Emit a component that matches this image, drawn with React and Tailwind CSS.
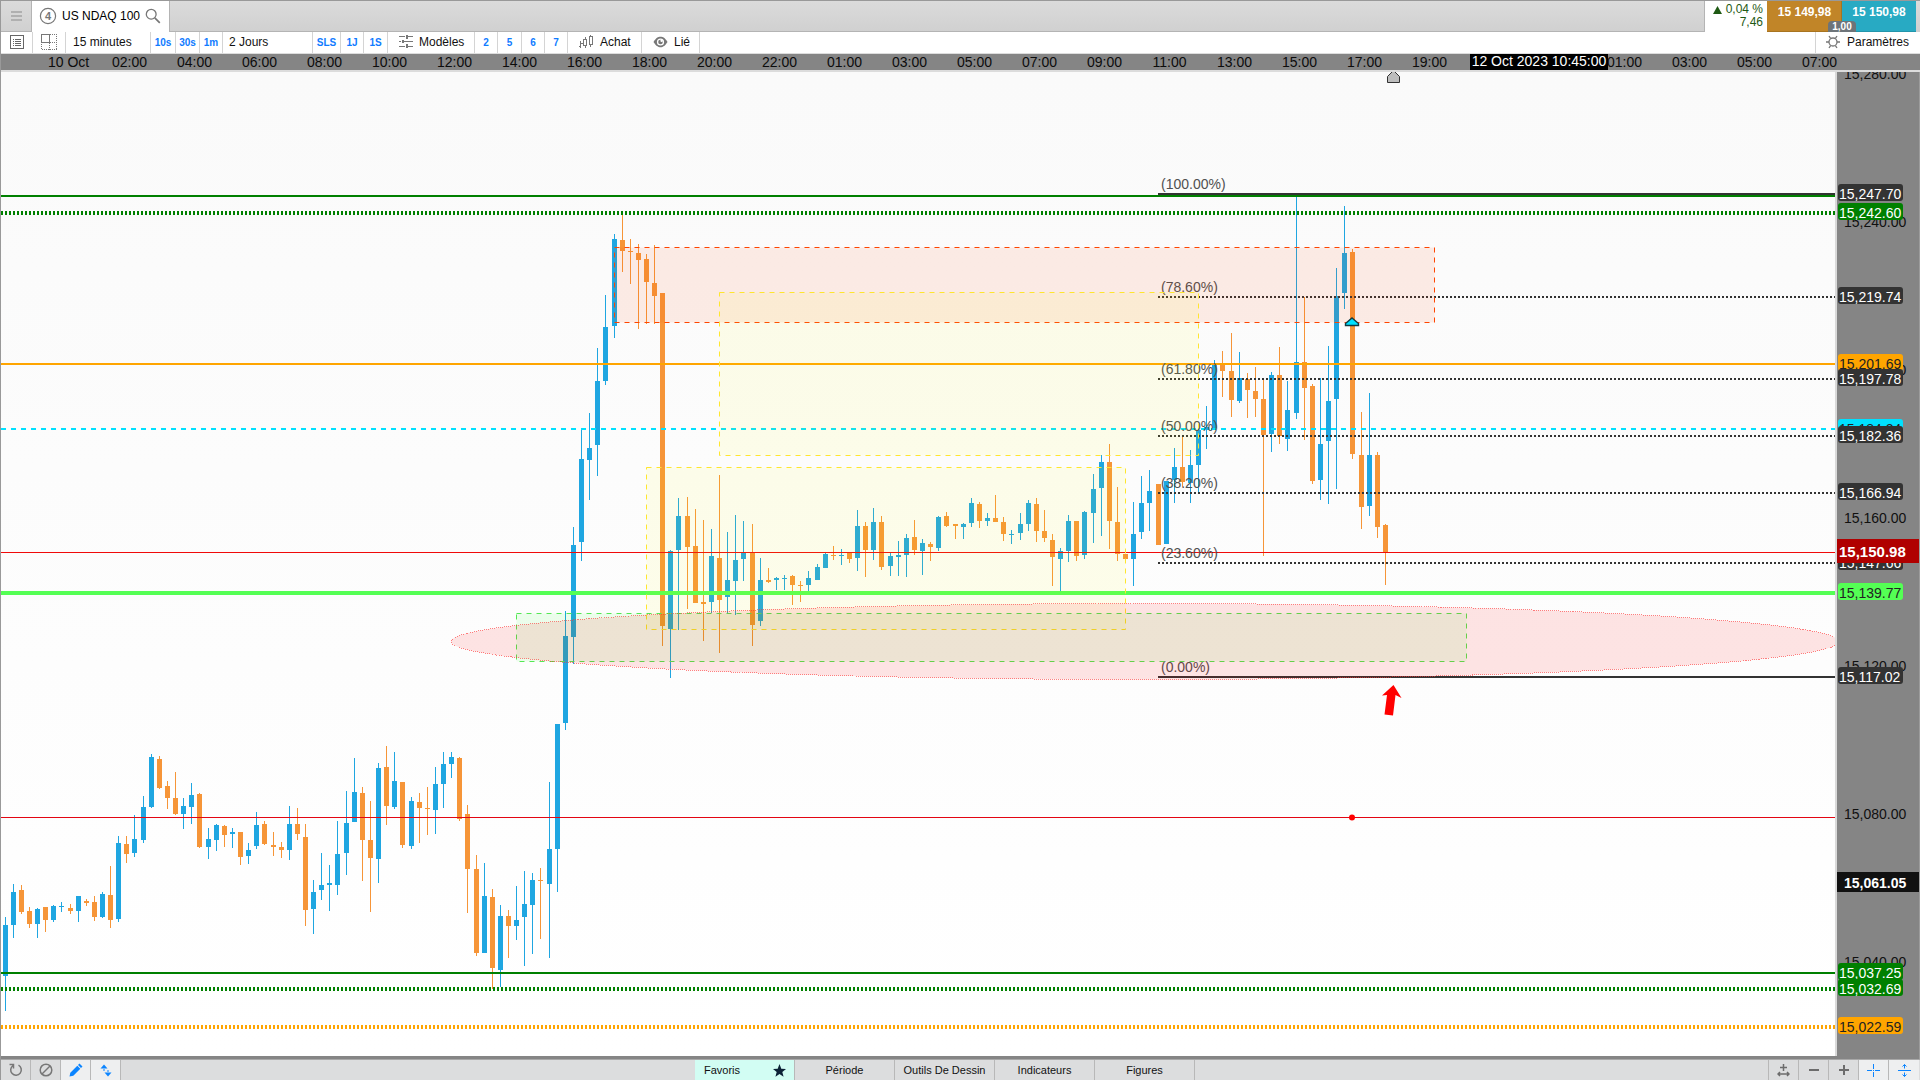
import React from "react";

/* [direction, x, high, bodyTop, bodyBottom, low] */
const CANDLES = [
  [1,5,917,925,976,1011],[1,13,884,892,925,938],[0,21,885,890,912,914],[0,29,907,911,924,928],
  [1,37,908,909,924,938],[0,45,907,907,920,932],[1,53,905,906,920,922],[1,61,902,906,907,912],
  [0,70,904,908,911,914],[1,78,896,896,911,922],[0,86,899,901,903,906],[0,94,896,902,917,921],
  [1,102,892,894,917,918],[0,110,866,895,920,928],[1,118,836,843,919,922],[0,126,836,844,854,863],
  [1,134,815,839,853,857],[1,143,796,807,840,843],[1,151,754,757,807,808],[0,159,756,759,788,789],
  [0,167,781,786,798,809],[0,175,772,798,814,815],[1,183,798,806,814,829],[1,191,783,795,807,824],
  [0,199,793,794,847,848],[1,208,828,839,847,859],[1,216,824,825,840,851],[0,224,825,826,835,847],
  [1,232,828,832,834,848],[0,240,832,832,857,865],[1,248,843,850,856,864],[1,256,812,825,846,849],
  [0,264,821,824,844,845],[0,273,832,845,847,856],[0,281,842,847,850,858],[1,289,806,824,850,860],
  [0,297,808,824,834,840],[0,305,824,837,910,926],[1,313,880,892,909,934],[1,321,853,885,890,900],
  [1,329,865,883,885,911],[1,337,821,854,885,895],[1,346,791,823,853,875],[1,354,758,792,822,822],
  [0,362,787,793,840,881],[0,370,801,840,858,912],[1,378,763,768,859,883],[0,386,746,767,806,825],
  [1,394,752,781,807,809],[0,402,782,782,845,848],[1,411,797,801,846,849],[0,419,793,802,808,843],
  [0,427,787,808,809,835],[1,435,767,784,810,834],[1,443,752,764,784,808],[1,451,752,757,764,778],
  [0,459,757,758,819,821],[0,467,805,814,869,913],[0,476,855,869,953,956],[1,484,863,896,953,953],
  [0,492,889,897,968,989],[1,500,905,916,970,987],[0,508,910,916,926,958],[1,516,886,920,926,940],
  [1,524,871,904,917,966],[1,532,873,880,905,954],[0,540,868,880,881,939],[1,549,782,849,884,958],
  [1,557,724,724,849,892],[1,565,611,636,723,730],[1,573,527,545,637,664],[1,581,430,459,542,561],
  [1,589,413,448,460,500],[1,597,348,381,445,476],[1,605,295,327,381,385],[1,614,234,239,326,338],
  [0,622,215,240,251,272],[0,630,239,251,252,284],[0,638,244,253,260,329],[0,646,254,259,282,324],
  [0,654,245,283,296,324],[0,662,293,293,626,646],[1,670,550,551,629,678],[1,678,498,516,550,630],
  [0,687,497,516,547,609],[0,695,509,546,603,603],[0,703,520,602,604,641],[1,711,529,556,602,613],
  [0,719,475,558,600,653],[1,727,532,580,597,613],[1,735,515,560,581,615],[1,743,521,552,559,581],
  [0,752,524,552,625,646],[1,760,558,580,621,626],[0,768,568,580,582,583],[1,776,577,578,580,590],
  [1,784,575,578,579,590],[0,792,575,576,585,605],[0,800,581,585,586,602],[1,808,571,578,585,591],
  [1,817,564,567,580,580],[1,825,552,554,568,568],[0,833,546,555,556,560],[1,841,549,555,556,565],
  [0,849,552,553,559,563],[1,857,510,526,558,571],[0,865,522,526,550,577],[1,873,508,522,550,560],
  [0,881,516,522,567,570],[1,890,552,556,566,576],[1,898,541,555,557,576],[1,906,534,538,555,577],
  [0,914,520,537,550,555],[1,922,539,543,551,575],[0,930,542,544,547,561],[1,938,516,517,548,551],
  [0,946,512,516,526,527],[0,955,524,524,526,539],[1,963,523,524,527,539],[1,971,498,503,523,527],
  [0,979,502,504,521,528],[1,987,513,518,521,526],[0,995,495,518,522,522],[0,1003,517,522,534,541],
  [1,1011,530,534,535,544],[1,1020,513,524,533,540],[1,1028,500,503,524,531],[0,1036,498,504,531,542],
  [0,1044,510,531,538,542],[0,1052,534,540,557,586],[1,1060,548,551,559,591],[1,1068,515,521,551,562],
  [0,1076,521,521,556,561],[1,1084,511,512,555,559],[1,1093,474,489,513,543],[1,1101,455,462,488,536],
  [0,1109,444,462,521,549],[0,1117,487,522,554,561],[0,1125,554,554,559,559],[1,1133,502,534,559,586],
  [1,1141,476,503,532,539],[1,1149,470,491,503,531],[0,1158,484,484,545,545],[1,1166,481,481,544,544],
  [1,1174,448,467,480,503],[0,1182,437,467,482,487],[1,1190,450,465,483,503],[1,1198,427,430,465,493],
  [1,1206,406,427,430,449],[1,1214,360,365,428,428],[0,1222,351,364,371,397],[0,1231,333,371,400,417],
  [1,1239,352,378,401,403],[0,1247,373,379,390,418],[0,1255,367,391,399,417],[0,1263,379,399,435,556],
  [1,1271,372,375,434,452],[0,1279,347,375,436,444],[1,1287,381,410,439,451],[1,1296,197,362,413,419],
  [0,1304,297,362,388,440],[0,1312,384,386,481,484],[1,1320,378,444,480,500],[1,1328,346,401,441,504],
  [1,1336,268,296,399,489],[1,1344,206,253,293,309],[0,1352,249,252,454,459],[0,1361,412,455,507,529],
  [1,1369,393,455,506,516],[0,1377,452,455,527,538],[0,1385,524,525,552,585],
];

/* [y, colour, thickness, dash] */
const LEVELS = [
  [196, "#008000", 2, ""],
  [213, "#008000", 4, "2 2"],
  [364, "#ffa500", 2, ""],
  [429, "#00e1ff", 2, "5 5"],
  [593, "#54ff54", 4, ""],
  [973, "#008000", 2, ""],
  [989, "#008000", 4, "2 2"],
  [1027, "#ffa500", 4, "2 2"],
];

const FIBS = [
  ["(100.00%)", 194, ""],
  ["(78.60%)", 297, "2 2"],
  ["(61.80%)", 379, "2 2"],
  ["(50.00%)", 436, "2 2"],
  ["(38.20%)", 493, "2 2"],
  ["(23.60%)", 563, "2 2"],
  ["(0.00%)", 677, ""],
];

const TICKS = [
  ["15,280.00", 74],
  ["15,240.00", 222],
  ["15,200.00", 370],
  ["15,160.00", 518],
  ["15,120.00", 666],
  ["15,080.00", 814],
  ["15,040.00", 962],
];

const TAGS = [
  ["15,247.70", 194, "bg-[#333333] text-white"],
  ["15,242.60", 213, "bg-[#008000] text-white"],
  ["15,219.74", 297, "bg-[#333333] text-white"],
  ["15,201.69", 364, "bg-[#ffa500] text-[#222222]"],
  ["15,197.78", 379, "bg-[#333333] text-white"],
  ["15,184.24", 429, "bg-[#00e1ff] text-[#222222]"],
  ["15,182.36", 436, "bg-[#333333] text-white"],
  ["15,166.94", 493, "bg-[#333333] text-white"],
  ["15,147.66", 563, "bg-[#333333] text-white"],
  ["15,139.77", 593, "bg-[#54ff54] text-[#222222]"],
  ["15,117.02", 677, "bg-[#333333] text-white"],
  ["15,037.25", 973, "bg-[#008000] text-white"],
  ["15,032.69", 989, "bg-[#008000] text-white"],
  ["15,022.59", 1027, "bg-[#ffa500] text-[#222222]"],
];

const TIMES = [
  "02:00","04:00","06:00","08:00","10:00","12:00","14:00","16:00","18:00","20:00","22:00",
  "01:00","03:00","05:00","07:00","09:00","11:00","13:00","15:00","17:00","19:00","21:00","23:00",
  "01:00","03:00","05:00","07:00",
];

/* y coordinate of the plot's first row */
const TOP = 72;

function Header() {
  return (
    <header className="flex h-8 shrink-0 border-t border-[#999999] bg-linear-to-b from-[#dbdbdb] to-[#d0d0d0]">
      <button aria-label="Menu" className="flex w-[31px] items-center justify-center border-r border-b border-[#b4b4b4]">
        <svg width="11" height="11" viewBox="0 0 11 11" fill="#b0b0b0" shapeRendering="crispEdges">
          <path d="M0 0h11v2H0zM0 4h11v2H0zM0 8h11v2H0z" />
        </svg>
      </button>
      <div className="flex w-[137px] items-center bg-white pb-[2px] pl-[7px]">
        <svg width="18" height="18" viewBox="0 0 18 18" fill="none" stroke="#777777">
          <circle cx="9" cy="9" r="7.6" strokeWidth="1.2" />
          <text x="9" y="13" textAnchor="middle" fontSize="11" fontWeight="700" fill="#777777" stroke="none">4</text>
        </svg>
        <h1 className="ml-[5px] whitespace-nowrap text-xs">US NDAQ 100</h1>
        <button aria-label="Rechercher" className="ml-[5px]">
          <svg width="16" height="16" viewBox="0 0 16 16" fill="none" stroke="#777777">
            <circle cx="6.2" cy="6.2" r="4.9" strokeWidth="1.3" />
            <path d="M9.8 9.8l5 5" strokeWidth="1.7" />
          </svg>
        </button>
      </div>
      <div className="flex-1 border-x border-b border-[#b4b4b4]" />
      <div className="flex w-[62px] flex-col items-end bg-white pt-[2px] pr-1 text-xs leading-[13px] text-[#1f5a14]">
        <span className="flex items-center gap-1 whitespace-nowrap">
          <svg width="9" height="8" viewBox="0 0 9 8" fill="#1f5a14"><path d="M4.5 0L9 8H0z" /></svg>
          0,04 %
        </span>
        <span>7,46</span>
      </div>
      <div className="relative mr-1 flex text-xs font-bold text-white">
        <button className="flex w-[75px] justify-center border-r border-b border-[#a87420] bg-[#c18528] pt-1 pl-px leading-[14px]">15 149,98</button>
        <button className="flex w-[74px] justify-center border-b border-[#2295ab] bg-[#28aac3] pt-1 leading-[14px]">15 150,98</button>
        <span className="absolute bottom-0 left-[61px] h-[11px] w-7 rounded-t-sm bg-[#6d7479] text-center text-[10px] leading-[11px]">1,00</span>
      </div>
    </header>
  );
}

const CELL = "flex items-center border-r border-[#d4d4d4] pb-[2px] ";
const QUICK = "flex items-center justify-center border-r border-[#d4d4d4] text-[10px] font-bold text-[#0f7bff] ";

function Toolbar() {
  return (
    <nav className="flex h-[22px] shrink-0 border-b border-[#dddddd] bg-white text-xs text-[#111111]">
      <button aria-label="Liste" className={CELL + "w-8 justify-center"}>
        <svg width="14" height="14" viewBox="0 0 14 14" fill="none" stroke="#666666" shapeRendering="crispEdges">
          <rect x="0.5" y="0.5" width="13" height="13" />
          <path d="M3 4h1M5 4h6M3 6h1M5 6h6M3 8h1M5 8h6M3 10h1M5 10h6" />
        </svg>
      </button>
      <button aria-label="Disposition" className={CELL + "w-[33px] justify-center"}>
        <svg width="16" height="16" viewBox="0 0 16 16" fill="none" stroke="#777777" shapeRendering="crispEdges">
          <rect x="0.5" y="0.5" width="8" height="8" />
          <path d="M8.500 .5h7v15h-15v-7M8.500 8.500v7M8.500 8.500h7" strokeDasharray="1 1" />
        </svg>
      </button>
      <button className={CELL + "w-[85px] pl-[7px]"}>15 minutes</button>
      <button className={QUICK + "w-[25px]"}>10s</button>
      <button className={QUICK + "w-6"}>30s</button>
      <button className={QUICK + "w-[23px]"}>1m</button>
      <button className={CELL + "w-[90px] pl-[6px]"}>2 Jours</button>
      <button className={QUICK + "w-7"}>SLS</button>
      <button className={QUICK + "w-[23px]"}>1J</button>
      <button className={QUICK + "w-6"}>1S</button>
      <button className={CELL + "w-[87px] gap-[6px] pl-[11px]"}>
        <svg width="14" height="13" viewBox="0 0 14 13" fill="#777777" shapeRendering="crispEdges">
          <path d="M0 1h6v1H0zM9 1h5v1H9zM7 0h2v4H7zM0 6h2v1H0zM5 6h9v1H5zM3 5h2v3H3zM0 11h6v1H0zM9 11h5v1H9zM7 9h2v4H7z" />
        </svg>
        Modèles
      </button>
      <button className={QUICK + "w-[23px]"}>2</button>
      <button className={QUICK + "w-6"}>5</button>
      <button className={QUICK + "w-[23px]"}>6</button>
      <button className={QUICK + "w-[23px]"}>7</button>
      <button className={CELL + "w-[74px] gap-[7px] pl-[10px]"}>
        <svg width="15" height="14" viewBox="0 0 15 14" fill="none" stroke="#777777" shapeRendering="crispEdges">
          <path d="M2.500 6v7M.5 11.500h2M2.500 8.500h2" />
          <rect x="5.500" y="4.500" width="3" height="6" />
          <path d="M7.500 2v2M7.500 11v2M12.500 0v2M12.500 9v3" />
          <rect x="11.500" y="1.500" width="3" height="8" />
        </svg>
        Achat
      </button>
      <button className={CELL + "w-[58px] gap-[6px] pl-[11px]"}>
        <svg width="15" height="12" viewBox="0 0 15 12">
          <path d="M.5 6C3 2 5 .8 7.500 .8S12 2 14.500 6C12 10 10 11.200 7.500 11.200S3 10 .5 6z" fill="#777777" />
          <circle cx="7.500" cy="6" r="3.600" fill="#ffffff" />
          <circle cx="7.500" cy="6" r="2.300" fill="#777777" />
          <circle cx="8.600" cy="4.800" r="1.200" fill="#ffffff" />
        </svg>
        Lié
      </button>
      <div className="flex-1" />
      <button className="flex w-[105px] items-center gap-[7px] border-l border-[#d4d4d4] pb-[2px] pl-[10px]">
        <svg width="14" height="14" viewBox="0 0 14 14" fill="none" stroke="#777777" strokeWidth="1.300">
          <circle cx="7" cy="7" r="4" />
          <path d="M0 7h3M11 7h3M3 1l1.600 2.400M11 1L9.400 3.400M3 13l1.600-2.400M11 13l-1.600-2.400" />
        </svg>
        Paramètres
      </button>
    </nav>
  );
}

function TimeAxis() {
  return (
    <div className="relative flex h-[18px] shrink-0 overflow-hidden border-b-2 border-[#dcdcdc] bg-[#858585] text-sm leading-4 text-[#0c0c0c]">
      <span className="w-[96px] shrink-0 pl-[47px]">10 Oct</span>
      {TIMES.map((t, i) => (
        <span key={i} className="w-[65px] shrink-0 text-center">{t}</span>
      ))}
      <span className="absolute top-0 left-[1469px] h-4 w-[138px] bg-black text-center leading-[15px] whitespace-nowrap text-white">
        12 Oct 2023 10:45:00
      </span>
    </div>
  );
}

function Plot() {
  return (
    <div className="relative min-w-0 flex-1 overflow-hidden border-r-2 border-[#d9d9d9] bg-linear-to-b from-[#fafafa] to-white">
      <svg className="absolute inset-0 h-full w-full" fontSize="14">
        <g transform="translate(-1 -72)">
          <g shapeRendering="crispEdges">
            {CANDLES.map(([up, x, h, t, b, l]) => (
              <g key={x} fill={up ? "#1fa6e1" : "#f69538"}>
                <rect x={x} y={h} width="1" height={l - h} />
                <rect x={x - 2} y={t} width="5" height={b - t} />
              </g>
            ))}
            {LEVELS.map(([y, color, size, dash]) => (
              <line key={y} x1="1" x2="110%" y1={y} y2={y} stroke={color} strokeWidth={size} strokeDasharray={dash} />
            ))}
            <rect x="1" y="552" width="110%" height="1" fill="#f00a0a" />
            <rect x="1" y="817" width="110%" height="1" fill="#e30613" />
            {FIBS.map(([label, y, dash]) => (
              <line key={label} x1="1158" x2="110%" y1={y} y2={y} stroke="#333333" strokeWidth="2" strokeDasharray={dash} />
            ))}
          </g>
          {FIBS.map(([label, y]) => (
            <text key={label} x="1161" y={y - 5} fill="#505050">{label}</text>
          ))}
          <rect x="614.5" y="247.5" width="820" height="75" fill="#ff4500" fillOpacity="0.09" stroke="#ff4500" strokeDasharray="5 5" />
          <rect x="719.5" y="292.5" width="479" height="163" fill="#ffff00" fillOpacity="0.075" stroke="#ffe62e" strokeDasharray="5 5" />
          <rect x="646.5" y="467.5" width="479" height="162" fill="#ffff00" fillOpacity="0.075" stroke="#ffe62e" strokeDasharray="5 5" />
          <rect x="516.5" y="613.5" width="950" height="48" fill="#00ff00" fillOpacity="0.07" stroke="#54e854" strokeDasharray="5 5" />
          <ellipse cx="1145" cy="641.5" rx="694" ry="38" fill="#ff0000" fillOpacity="0.1" />
          <ellipse cx="1145" cy="641.5" rx="694" ry="38" fill="none" stroke="#ff3030" strokeOpacity="0.6" strokeDasharray="1 1" shapeRendering="crispEdges" />
          <path d="M1345.500 325.500v-2l6.500-5.500 6.500 5.500v2z" fill="#00e1ff" stroke="#123a42" strokeWidth="1.400" />
          <path d="M1393.500 685l8 13-6-3-2.500 20.500-8.500-1 2.500-19.500-5 .5z" fill="#ff0000" />
          <circle cx="1352" cy="817.500" r="3" fill="#ff0000" />
          <path d="M1387.500 82.500v-6l6-6 6 6v6z" fill="#bdbdbd" stroke="#333333" />
        </g>
      </svg>
    </div>
  );
}

function PriceAxis() {
  return (
    <aside className="relative w-[83px] shrink-0 overflow-hidden border-r border-[#9c9c9c] bg-[#858585] text-sm">
      {TICKS.map(([label, y]) => (
        <span key={label} className="absolute left-[7px] leading-4 text-[#101010]" style={{ top: y - 8 - TOP }}>{label}</span>
      ))}
      {TAGS.map(([label, y, tone]) => (
        <span key={label} className={"absolute left-px h-[17px] w-[65px] rounded-[3px] pl-px leading-[20px] " + tone} style={{ top: y - 10 - TOP }}>
          {label}
        </span>
      ))}
      <strong className="absolute top-[467px] left-0 h-6 w-full bg-[#b00000] pl-[2px] text-[15px] leading-[25px] text-white">15,150.98</strong>
      <strong className="absolute top-[800px] left-0 h-5 w-full bg-[#111111] pl-[7px] leading-[22px] text-white">15,061.05</strong>
    </aside>
  );
}

const TOOL = "flex w-[30px] items-center justify-center border-r border-[#b8b8b8] ";
const TAB = "w-[100px] border-r border-[#b8b8b8] text-center";

function BottomBar() {
  return (
    <footer className="flex h-[21px] shrink-0 border-t border-[#a8a8a8] bg-[#dcddde] text-[11px] text-[#111111]">
      <button aria-label="Actualiser" className={TOOL}>
        <svg width="14" height="14" viewBox="0 0 14 14" fill="none" stroke="#777777" strokeWidth="1.500">
          <path d="M4 2.500A5.300 5.300 0 1 0 9.500 2.200M0.500 1.500H4.500V5.500" />
        </svg>
      </button>
      <button aria-label="Interdire" className={TOOL}>
        <svg width="14" height="14" viewBox="0 0 14 14" fill="none" stroke="#777777" strokeWidth="1.500">
          <circle cx="7" cy="7" r="5.800" /><path d="M3 11l8-8" />
        </svg>
      </button>
      <button aria-label="Dessiner" className={TOOL + "bg-[#eeeff0]"}>
        <svg width="14" height="14" viewBox="0 0 14 14" fill="#0a84ff">
          <path d="M10.500 .5l3 3-1.500 1.500-3-3zM8.300 2.700l3 3-7 7L.5 13.500l.8-3.800z" />
        </svg>
      </button>
      <button aria-label="Ajuster" className={TOOL + "bg-[#eeeff0]"}>
        <svg width="12" height="13" viewBox="0 0 12 13" fill="#0a84ff">
          <path d="M4 .5L7.500 4.500h-7zM3 5.500h2v1H3zM8 12.500L4.500 8.500h7zM7 6.500h2v1H7z" />
        </svg>
      </button>
      <div className="w-[574px] shrink-0 grow-0" />
      <button className="flex w-[100px] items-center justify-between border-r border-[#b8b8b8] bg-[#d2fdf3] pr-2 pl-[9px]">
        Favoris
        <svg width="13" height="13" viewBox="0 0 24 24" fill="#0c2236"><path d="M12 0l3.300 8.600 8.700.5-6.800 5.500 2.300 8.900L12 18.600l-7.500 4.900 2.300-8.900L0 9.100l8.700-.5z" /></svg>
      </button>
      <button className={TAB}>Période</button>
      <button className={TAB}>Outils De Dessin</button>
      <button className={TAB}>Indicateurs</button>
      <button className={TAB}>Figures</button>
      <div className="flex-1 border-r border-[#b8b8b8]" />
      <button aria-label="Largeur" className={TOOL}>
        <svg width="13" height="13" viewBox="0 0 13 13" fill="none" stroke="#6c6c6c" strokeWidth="1.500">
          <path d="M3 3.500h7M6.500 0v7M1 10h11M3 8l-2 2 2 2M10 8l2 2-2 2" />
        </svg>
      </button>
      <button aria-label="Zoom arrière" className={TOOL}>
        <svg width="10" height="10" viewBox="0 0 10 10" fill="#6c6c6c"><path d="M0 4h10v2H0z" /></svg>
      </button>
      <button aria-label="Zoom avant" className={TOOL}>
        <svg width="10" height="10" viewBox="0 0 10 10" fill="#6c6c6c"><path d="M0 4h10v2H0zM4 0h2v10H4z" /></svg>
      </button>
      <button aria-label="Réticule" className={TOOL + "bg-[#eeeff0]"}>
        <svg width="13" height="13" viewBox="0 0 13 13" fill="#0a84ff" shapeRendering="crispEdges">
          <path d="M0 6h5v1H0zM8 6h5v1H8zM6 0h1v5H6zM6 8h1v5H6zM6 6h1v1H6z" />
        </svg>
      </button>
      <button aria-label="Échelle verticale" className="mr-px flex w-[30px] items-center justify-center bg-[#eeeff0]">
        <svg width="13" height="13" viewBox="0 0 13 13" fill="none" stroke="#0a84ff">
          <path d="M0 6.500h13M6.500 .5v4M4.500 2.500l2-2 2 2M6.500 8.500v4M4.500 10.500l2 2 2-2" />
        </svg>
      </button>
    </footer>
  );
}

export default function App() {
  return (
    <div className="flex h-screen flex-col overflow-hidden bg-[#858585] font-['Liberation_Sans',Arial,sans-serif] text-black">
      <div className="flex min-h-0 flex-1 flex-col border-l border-[#999999]">
        <Header />
        <Toolbar />
        <TimeAxis />
        <main className="flex min-h-0 flex-1">
          <div className="flex min-w-0 flex-1 pb-[3px]"><Plot /></div>
          <PriceAxis />
        </main>
        <BottomBar />
      </div>
    </div>
  );
}
